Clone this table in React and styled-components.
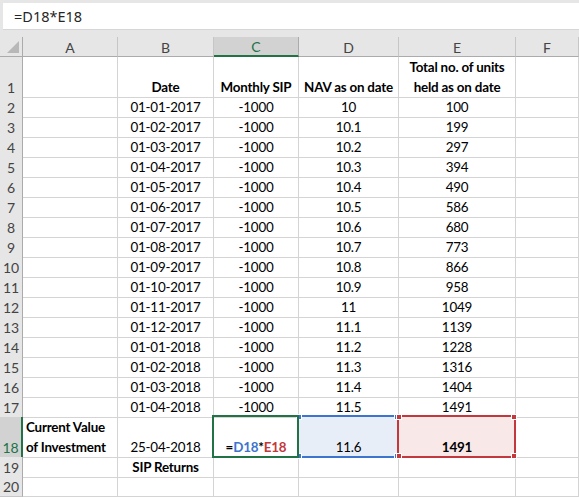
import React from 'react';
import styled, { createGlobalStyle, css } from "styled-components";

const GlobalStyle = createGlobalStyle`
	html, body {
		margin: 0;
		padding: 0;
		background: #ffffff;
	}
	body {
		width: 579px;
		height: 497px;
		overflow: hidden;
	}
`

const GREEN = "#217346"
const BLUE = "#3d74cf"
const RED = "#c3383d"
const COLS = "23px 95px 96px 85px 100px 117px 1fr"

const Window = styled.div`
	width: 579px;
	height: 497px;
	display: flex;
	flex-direction: column;
	font-family: Lato, "Liberation Sans", sans-serif;
	overflow: hidden;
`

const FormulaArea = styled.div`
	height: 39px;
	background: #e6e6e6;
	padding: 3px 0 0 3px;
	box-sizing: border-box;
`

const FormulaBox = styled.div`
	height: 26px;
	background: #ffffff;
	border-bottom: 1px solid #d6d6d6;
	display: flex;
	align-items: center;
	padding-left: 11px;
	font-family: "Noto Sans", "Open Sans", sans-serif;
	font-size: 14.5px;
	color: #262626;
`

const Sheet = styled.div`
	display: flex;
	flex-direction: column;
`

const Row = styled.div`
	display: grid;
	grid-template-columns: ${COLS};
	height: ${(p) => p.$h}px;
`

const Corner = styled.div`
	background: #e6e6e6;
	border-right: 1px solid #ababab;
	border-bottom: 1px solid #ababab;
	display: flex;
	align-items: flex-end;
	justify-content: flex-end;
	padding: 0 3px 3px 0;
`

const ColHead = styled.div`
	background: ${(p) => (p.$active ? "#d2d2d2" : "#e6e6e6")};
	color: ${(p) => (p.$active ? GREEN : "#444444")};
	border-right: 1px solid ${(p) => (p.$active ? "#ababab" : "#c6c6c6")};
	border-bottom: ${(p) => (p.$active ? `2px solid ${GREEN}` : "1px solid #ababab")};
	display: flex;
	align-items: center;
	justify-content: center;
	font-size: 14px;
	padding-top: 1px;
`

const RowHead = styled.div`
	background: ${(p) => (p.$active ? "#d2d2d2" : "#e6e6e6")};
	color: ${(p) => (p.$active ? GREEN : "#444444")};
	border-right: ${(p) => (p.$active ? `2px solid ${GREEN}` : "1px solid #ababab")};
	border-bottom: 1px solid #c6c6c6;
	display: flex;
	align-items: flex-end;
	justify-content: center;
	font-size: 14px;
	line-height: 19px;
	box-sizing: border-box;
`

const Cell = styled.div`
	position: relative;
	border-right: 1px solid #d4d4d4;
	border-bottom: 1px solid #d4d4d4;
	display: flex;
	align-items: flex-end;
	justify-content: ${(p) => (p.$left ? "flex-start" : "center")};
	text-align: ${(p) => (p.$left ? "left" : "center")};
	padding: 0 3px 0;
	font-size: 13.4px;
	letter-spacing: -0.2px;
	line-height: 20px;
	color: #000000;
	font-weight: ${(p) => (p.$bold ? 700 : 400)};
	background: ${(p) => p.$fill || "transparent"};
	white-space: nowrap;
`

const Frame = styled.div`
	position: absolute;
	top: -2px;
	left: -2px;
	right: -1px;
	bottom: -1px;
	border: 2px solid ${(p) => p.$color};
	z-index: ${(p) => p.$z};
	pointer-events: none;
`

const Handle = styled.span`
	position: absolute;
	width: 4px;
	height: 4px;
	background: ${(p) => p.$color};
	border: 1px solid #ffffff;
	z-index: 5;
	${(p) => (p.$top ? css`top: -3px;` : css`bottom: -3px;`)}
	${(p) => (p.$leftSide ? css`left: -3px;` : css`right: -3px;`)}
`

const Ref = styled.span`
	color: ${(p) => p.$color};
`

const corners = [
	{ top: true, leftSide: true },
	{ top: true, leftSide: false },
	{ top: false, leftSide: true },
	{ top: false, leftSide: false },
]

const RefFrame = ({ color }) => (
	<Frame $color={color} $z={2}>
		{corners.map((c, i) => (
			<Handle key={i} $color={color} $top={c.top} $leftSide={c.leftSide} />
		))}
	</Frame>
)

const units = [100, 199, 297, 394, 490, 586, 680, 773, 866, 958, 1049, 1139, 1228, 1316, 1404, 1491]

const rows = units.map((u, i) => {
	const month = (i % 12) + 1
	const year = 2017 + Math.floor(i / 12)
	const nav = (10 + i * 0.1).toFixed(1).replace(/\.0$/, "")
	return {
		n: i + 2,
		date: `01-${String(month).padStart(2, "0")}-${year}`,
		sip: "-1000",
		nav,
		units: u,
	}
})

const App = () => {
	return (
		<Window>
			<GlobalStyle />
			<FormulaArea>
				<FormulaBox>=D18*E18</FormulaBox>
			</FormulaArea>
			<Sheet>
				<Row $h={20}>
					<Corner>
						<svg width="12" height="12" viewBox="0 0 12 12">
							<polygon points="12,0 12,12 0,12" fill="#b8b8b8" />
						</svg>
					</Corner>
					{["A", "B", "C", "D", "E", "F"].map((c) => (
						<ColHead key={c} $active={c === "C"}>{c}</ColHead>
					))}
				</Row>
				<Row $h={40}>
					<RowHead>1</RowHead>
					<Cell />
					<Cell $bold>Date</Cell>
					<Cell $bold>Monthly SIP</Cell>
					<Cell $bold>NAV as on date</Cell>
					<Cell $bold>Total no. of units<br />held as on date</Cell>
					<Cell />
				</Row>
				{rows.map((r) => (
					<Row $h={20} key={r.n}>
						<RowHead>{r.n}</RowHead>
						<Cell />
						<Cell>{r.date}</Cell>
						<Cell>{r.sip}</Cell>
						<Cell>{r.nav}</Cell>
						<Cell>{r.units}</Cell>
						<Cell />
					</Row>
				))}
				<Row $h={40}>
					<RowHead $active>18</RowHead>
					<Cell $bold $left>Current Value<br />of Investment</Cell>
					<Cell>25-04-2018</Cell>
					<Cell $bold>
						=<Ref $color={BLUE}>D18</Ref>*<Ref $color={RED}>E18</Ref>
						<Frame $color={GREEN} $z={3} />
					</Cell>
					<Cell $fill="#e8eef8">
						11.6
						<RefFrame color={BLUE} />
					</Cell>
					<Cell $bold $fill="#f9e8e8">
						1491
						<RefFrame color={RED} />
					</Cell>
					<Cell />
				</Row>
				<Row $h={20}>
					<RowHead>19</RowHead>
					<Cell />
					<Cell $bold>SIP Returns</Cell>
					<Cell />
					<Cell />
					<Cell />
					<Cell />
				</Row>
				<Row $h={20}>
					<RowHead>20</RowHead>
					<Cell />
					<Cell />
					<Cell />
					<Cell />
					<Cell />
					<Cell />
				</Row>
			</Sheet>
		</Window>
	);
}

export default App;
